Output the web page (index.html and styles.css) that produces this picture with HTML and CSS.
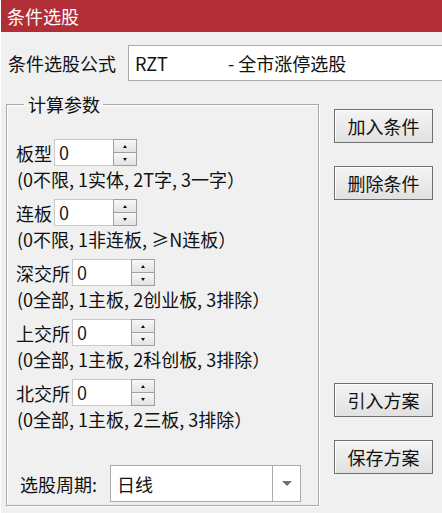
FILE: index.html
```html
<!DOCTYPE html>
<html lang="zh">
<head>
<meta charset="utf-8">
<title>条件选股</title>
<link rel="stylesheet" href="styles.css">
</head>
<body>
<div class="window">
  <div class="titlebar">条件选股</div>
  <div class="content">
    <div class="formula-row">
      <span class="formula-label">条件选股公式</span>
      <div class="formula-input"><span class="code">RZT</span><span class="name">- 全市涨停选股</span></div>
    </div>
    <div class="main">
      <fieldset class="group">
        <legend>计算参数</legend>
        <div class="param">
          <div class="param-line"><span class="plabel">板型</span><div class="spin"><div class="spin-field">0</div><div class="spin-btns"><div class="sbtn"><i class="up"></i></div><div class="sbtn"><i class="down"></i></div></div></div></div>
          <div class="desc">(0不限, 1实体, 2T字, 3一字）</div>
        </div>
        <div class="param">
          <div class="param-line"><span class="plabel">连板</span><div class="spin"><div class="spin-field">0</div><div class="spin-btns"><div class="sbtn"><i class="up"></i></div><div class="sbtn"><i class="down"></i></div></div></div></div>
          <div class="desc">(0不限, 1非连板, ≥N连板）</div>
        </div>
        <div class="param">
          <div class="param-line"><span class="plabel">深交所</span><div class="spin"><div class="spin-field">0</div><div class="spin-btns"><div class="sbtn"><i class="up"></i></div><div class="sbtn"><i class="down"></i></div></div></div></div>
          <div class="desc">(0全部, 1主板, 2创业板, 3排除）</div>
        </div>
        <div class="param">
          <div class="param-line"><span class="plabel">上交所</span><div class="spin"><div class="spin-field">0</div><div class="spin-btns"><div class="sbtn"><i class="up"></i></div><div class="sbtn"><i class="down"></i></div></div></div></div>
          <div class="desc">(0全部, 1主板, 2科创板, 3排除）</div>
        </div>
        <div class="param">
          <div class="param-line"><span class="plabel">北交所</span><div class="spin"><div class="spin-field">0</div><div class="spin-btns"><div class="sbtn"><i class="up"></i></div><div class="sbtn"><i class="down"></i></div></div></div></div>
          <div class="desc">(0全部, 1主板, 2三板, 3排除）</div>
        </div>
        <div class="period-row">
          <span class="period-label">选股周期:</span>
          <div class="select"><span class="select-value">日线</span><span class="select-btn"><i class="caret"></i></span></div>
        </div>
      </fieldset>
      <div class="buttons">
        <div class="btn">加入条件</div>
        <div class="btn">删除条件</div>
        <div class="btn push">引入方案</div>
        <div class="btn">保存方案</div>
      </div>
    </div>
  </div>
</div>
</body>
</html>
```
FILE: styles.css
```css
* { box-sizing: border-box; }
html, body {
  margin: 0;
  padding: 0;
  background: #f0f0f0;
}
body {
  width: 442px;
  height: 513px;
  overflow: hidden;
  font-family: "Noto Sans CJK SC", "Noto Sans", sans-serif;
  font-size: 18px;
  color: #111;
}
.window {
  width: 442px;
  height: 513px;
  display: flex;
  flex-direction: column;
  border-left: 1px solid #ffffff;
}
.titlebar {
  height: 32px;
  background: #b22e36;
  color: #fff;
  font-size: 18px;
  line-height: 32px;
  padding-left: 6px;
  flex: none;
}
.content {
  flex: 1;
  padding: 13px 0 0 5px;
  display: flex;
  flex-direction: column;
}
.formula-row {
  display: flex;
  align-items: center;
  height: 36px;
}
.formula-label {
  flex: none;
  width: 122px;
  padding-left: 2px;
  line-height: 20px;
}
.formula-input {
  flex: none;
  width: 330px;
  height: 36px;
  background: #fff;
  border: 1px solid #ababab;
  display: flex;
  align-items: center;
  padding-left: 6px;
}
.formula-input .code {
  display: inline-block;
  width: 93px;
}
.main {
  display: flex;
  margin-top: 13px;
  height: 412px;
}
.group {
  margin: 0;
  width: 313px;
  border: 1px solid #a9a9a9;
  box-shadow: inset 1px 1px 0 #fff, 1px 1px 0 #fff;
  padding: 25px 0 3px 9px;
  display: flex;
  flex-direction: column;
}
.group legend {
  margin-left: 8px;
  padding: 0 3px 0 4px;
  font-size: 18px;
  line-height: 20px;
}
.param {
  margin-bottom: 10px;
}
.param-line {
  display: flex;
  align-items: center;
  height: 27px;
}
.plabel {
  margin-right: 2px;
  line-height: 20px;
}
.spin {
  display: flex;
  height: 27px;
}
.spin-field {
  width: 59px;
  height: 27px;
  background: #fff;
  border: 1px solid #c8c8c8;
  border-right: none;
  padding-left: 4px;
  line-height: 25px;
  font-size: 18px;
  color: #1a1a1a;
}
.spin-btns {
  width: 24px;
  height: 27px;
  display: flex;
  flex-direction: column;
  border: 1px solid #a0a0a0;
  background: #a0a0a0;
  gap: 1px;
}
.sbtn {
  flex: 1;
  background: linear-gradient(#f7f7f7, #e3e3e3);
  display: flex;
  align-items: center;
  justify-content: center;
}
.sbtn i {
  width: 0;
  height: 0;
  border-left: 2.5px solid transparent;
  border-right: 2.5px solid transparent;
}
.sbtn i.up { border-bottom: 3px solid #111; }
.sbtn i.down { border-top: 3px solid #111; }
.desc {
  margin-top: 3px;
  line-height: 20px;
  padding-left: 1px;
  font-size: 18px;
  white-space: nowrap;
}
.period-row {
  margin-top: auto;
  display: flex;
  align-items: center;
  padding-left: 4px;
}
.period-label {
  width: 90px;
  line-height: 20px;
}
.select {
  width: 191px;
  height: 37px;
  background: #fff;
  border: 1px solid #ababab;
  display: flex;
  align-items: stretch;
}
.select-value {
  flex: 1;
  padding-left: 6px;
  display: flex;
  align-items: center;
}
.select-btn {
  width: 28px;
  border-left: 1px solid #ababab;
  display: flex;
  align-items: center;
  justify-content: center;
}
.caret {
  width: 0;
  height: 0;
  border-left: 5px solid transparent;
  border-right: 5px solid transparent;
  border-top: 5px solid #707070;
}
.buttons {
  display: flex;
  flex-direction: column;
  margin-left: 15px;
  padding: 15px 0 32px;
}
.btn {
  width: 99px;
  height: 34px;
  border: 1px solid #6f6f6f;
  box-shadow: inset 1px 1px 0 #fff;
  background: linear-gradient(#f4f4f4, #e1e1e1);
  display: flex;
  align-items: center;
  justify-content: center;
  font-size: 18px;
  margin-bottom: 23px;
}
.btn:last-child { margin-bottom: 0; }
.btn.push { margin-top: auto; }
```
